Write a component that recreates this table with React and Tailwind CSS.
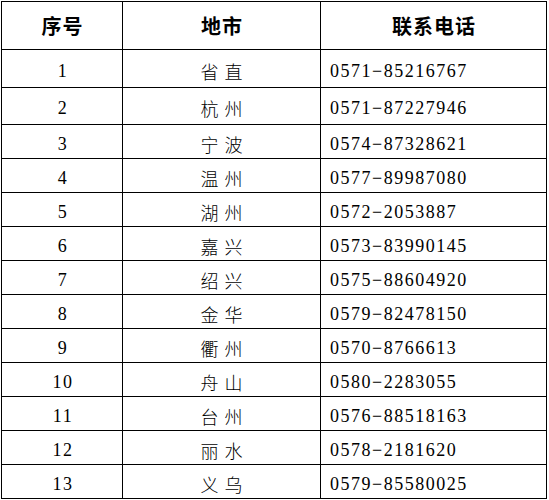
import React from "react";

const rows = [
  ["1", "省直", "0571", "85216767"],
  ["2", "杭州", "0571", "87227946"],
  ["3", "宁波", "0574", "87328621"],
  ["4", "温州", "0577", "89987080"],
  ["5", "湖州", "0572", "2053887"],
  ["6", "嘉兴", "0573", "83990145"],
  ["7", "绍兴", "0575", "88604920"],
  ["8", "金华", "0579", "82478150"],
  ["9", "衢州", "0570", "8766613"],
  ["10", "舟山", "0580", "2283055"],
  ["11", "台州", "0576", "88518163"],
  ["12", "丽水", "0578", "2181620"],
  ["13", "义乌", "0579", "85580025"],
];

const heights = ["h-[38px]", "h-[37px]"];

export default function App() {
  const serif = { fontFamily: '"Liberation Serif", "Noto Sans CJK SC", serif' };
  return (
    <div className="w-[549px] h-[500px] bg-white pl-px pt-px">
      <table className="border-collapse w-[545px] table-fixed text-black">
        <colgroup>
          <col className="w-[121px]" />
          <col className="w-[198px]" />
          <col className="w-[226px]" />
        </colgroup>
        <thead>
          <tr className="h-[48px]">
            {["序号", "地市", "联系电话"].map((h) => (
              <th
                key={h}
                className="border-[1.5px] border-black text-center align-middle font-bold text-[20px] tracking-[1px] pl-[1px] pt-[1px] font-['Noto_Sans_CJK_SC',sans-serif]"
              >
                {h}
              </th>
            ))}
          </tr>
        </thead>
        <tbody>
          {rows.map((r, i) => (
            <tr key={r[0]} className={heights[i] || "h-[34px]"}>
              <td
                className="border-[1.5px] border-black text-center align-middle text-[18px] tracking-[1.5px] pl-[2px] pt-[4px] leading-none"
                style={serif}
              >
                {r[0]}
              </td>
              <td className="border-[1.5px] border-black text-center align-middle text-[18px] tracking-[6px] pl-[6px] pt-[4px] leading-none font-['Noto_Sans_CJK_SC',sans-serif] font-light">
                {r[1]}
              </td>
              <td
                className="border-[1.5px] border-black text-left align-middle text-[18px] tracking-[1.5px] pl-[9px] pt-[4px] leading-none"
                style={serif}
              >
                {r[2]}−{r[3]}
              </td>
            </tr>
          ))}
        </tbody>
      </table>
    </div>
  );
}
